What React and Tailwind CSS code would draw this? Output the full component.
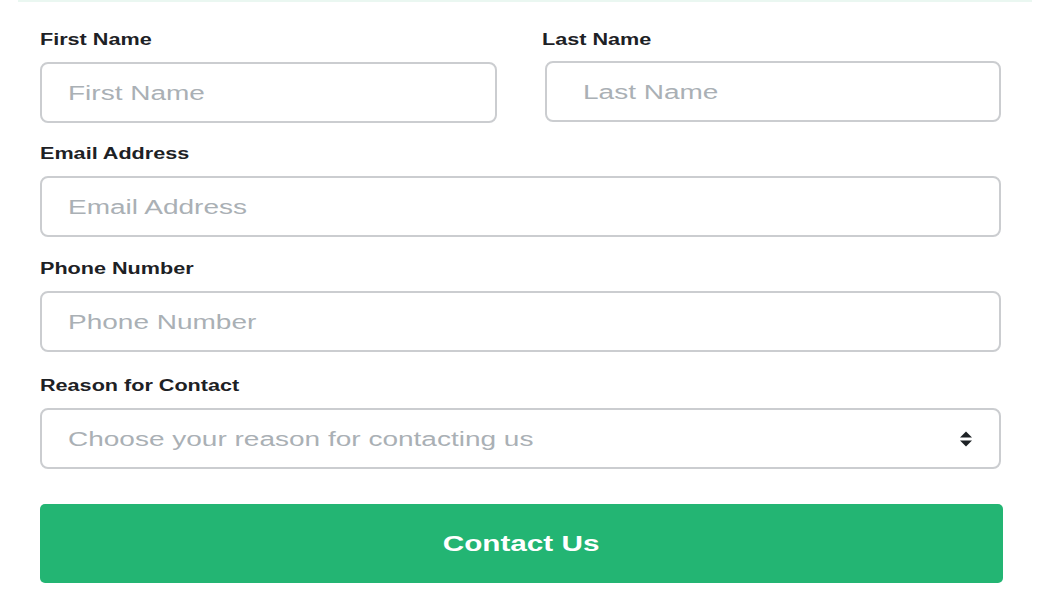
import React from 'react';

const font = { fontFamily: '"Liberation Sans", Arial, sans-serif' };

const Label = ({ children, className = '' }) => (
  <label className={`block h-[20px] text-[16px] leading-[20px] font-bold text-[#1d2125] ${className}`}>
    <span className="inline-block origin-left scale-x-[1.35]">{children}</span>
  </label>
);

const Field = ({ placeholder, pad = 'pl-[26px]', type = 'text' }) => (
  <div className={`h-[61px] flex items-center rounded-[8px] border-2 border-[#cbcdd0] bg-white overflow-hidden ${pad}`}>
    <input
      type={type}
      placeholder={placeholder}
      className="w-[calc(100%/1.4)] origin-left scale-x-[1.4] bg-transparent outline-none text-[20px] text-[#1d2125] placeholder:text-[#aab0b5]"
      style={font}
    />
  </div>
);

export default function App() {
  return (
    <div className="w-[1050px] h-[600px] bg-white" style={font}>
      <div className="mx-[18px] h-[2px] bg-[#eaf7f1]" />
      <form className="pl-[40px] pr-[49px] pt-[28px]" onSubmit={(e) => e.preventDefault()}>
        <div className="grid grid-cols-2 gap-x-[48px]">
          <div>
            <Label>First Name</Label>
            <div className="mt-[12px]">
              <Field placeholder="First Name" />
            </div>
          </div>
          <div>
            <Label className="-ml-[3px]">Last Name</Label>
            <div className="mt-[11px]">
              <Field placeholder="Last Name" pad="pl-[36px]" />
            </div>
          </div>
        </div>

        <div className="mt-[21px]">
          <Label>Email Address</Label>
          <div className="mt-[12px]">
            <Field placeholder="Email Address" type="email" />
          </div>
        </div>

        <div className="mt-[22px]">
          <Label>Phone Number</Label>
          <div className="mt-[12px]">
            <Field placeholder="Phone Number" type="tel" />
          </div>
        </div>

        <div className="mt-[24px]">
          <Label>Reason for Contact</Label>
          <div className="mt-[12px] h-[61px] flex items-center rounded-[8px] border-2 border-[#cbcdd0] bg-white overflow-hidden pl-[26px] pr-[26px]">
            <div className="flex-1 min-w-0">
              <select
                defaultValue=""
                className="w-[calc(100%/1.4)] origin-left scale-x-[1.4] appearance-none bg-transparent outline-none text-[20px] text-[#aab0b5]"
                style={font}
              >
                <option value="" disabled hidden>Choose your reason for contacting us</option>
                <option>General Inquiry</option>
                <option>Support</option>
                <option>Partnership</option>
              </select>
            </div>
            <svg width="14" height="18" viewBox="0 0 14 18" className="shrink-0">
              <path d="M7 1.5 L13 7.5 H1 Z" fill="#1d2125" />
              <path d="M7 16.5 L13 10.5 H1 Z" fill="#1d2125" />
            </svg>
          </div>
        </div>

        <button
          type="submit"
          className="mt-[35px] w-[963px] h-[79px] rounded-[5px] bg-[#23b573] text-white text-[22px] font-bold flex items-center justify-center"
        >
          <span className="inline-block scale-x-[1.35]">Contact Us</span>
        </button>
      </form>
    </div>
  );
}
